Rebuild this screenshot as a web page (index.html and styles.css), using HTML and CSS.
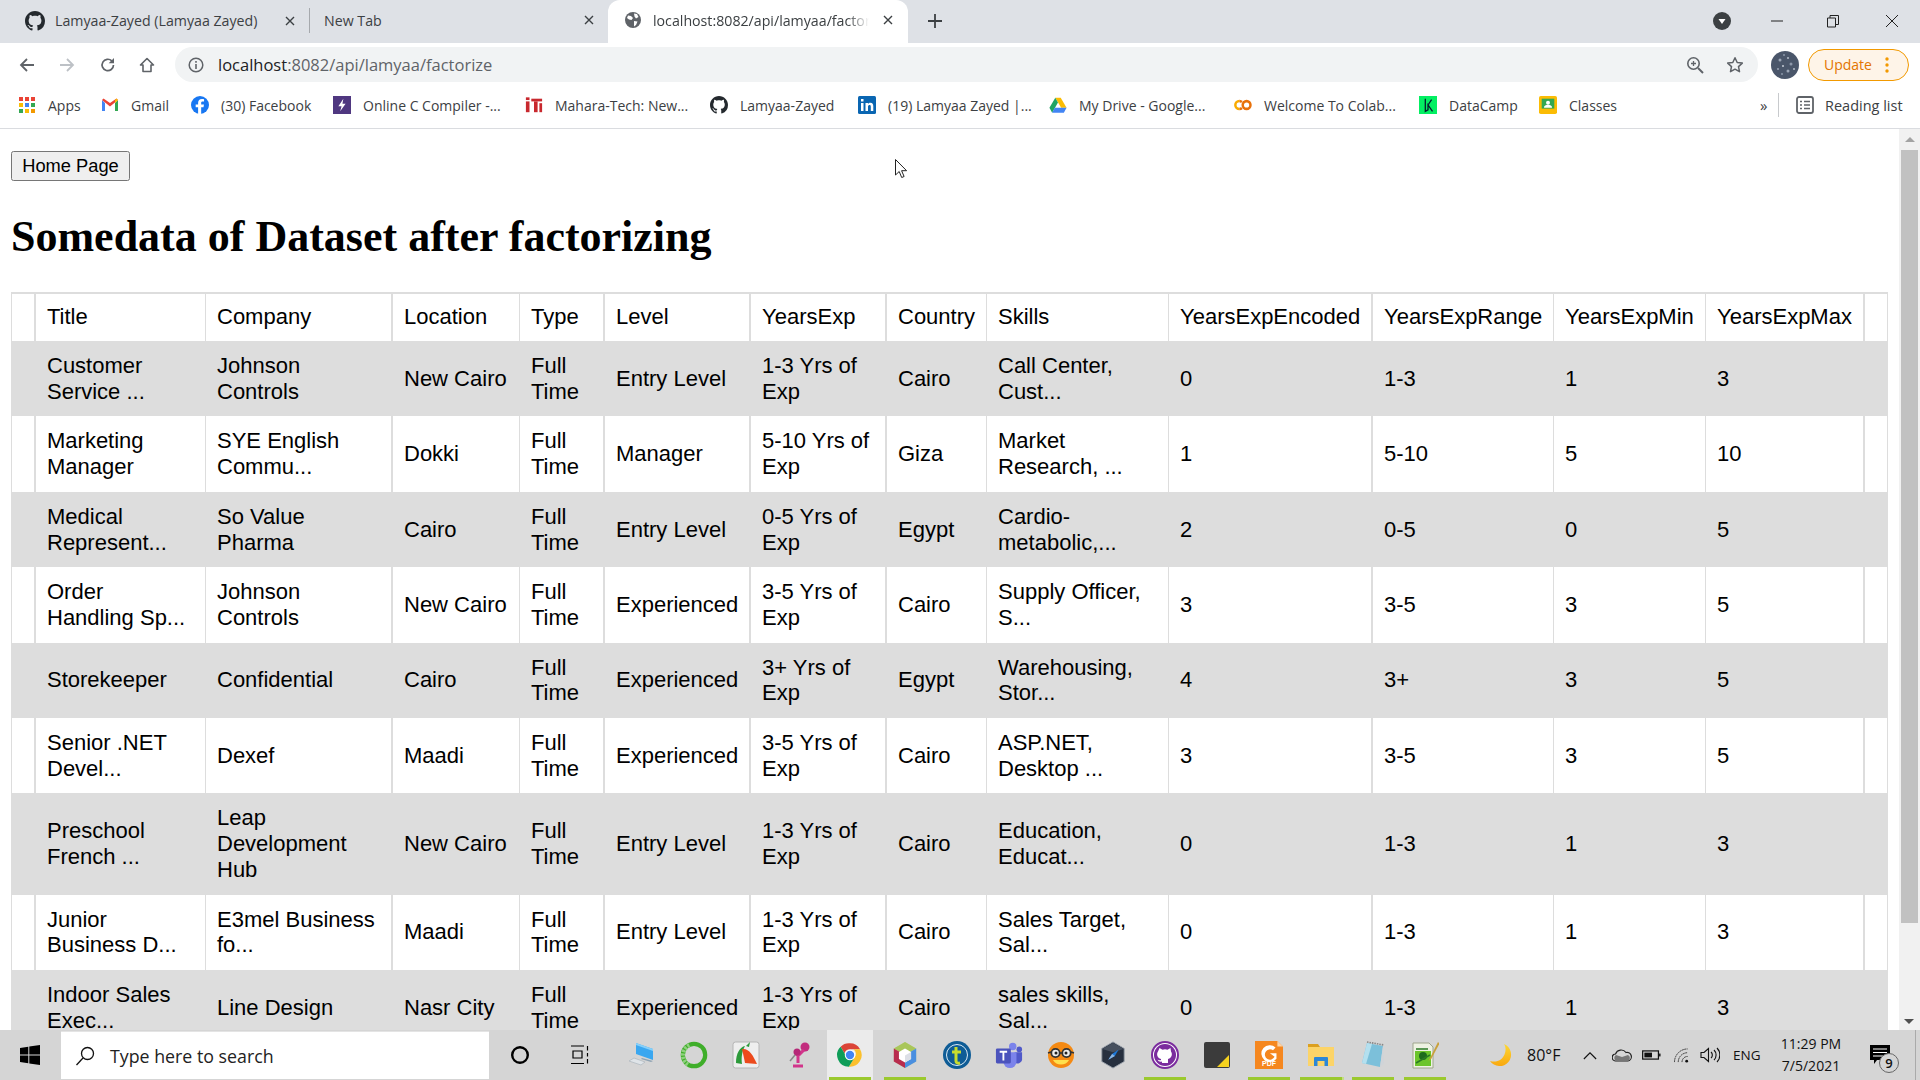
FILE: index.html
```html
<!DOCTYPE html>
<html lang="en">
<head>
<meta charset="utf-8">
<title>Somedata of Dataset after factorizing</title>
<link rel="stylesheet" href="styles.css">
</head>
<body>
<svg class="defs" width="0" height="0">
  <symbol id="gh" viewBox="0 0 16 16"><path d="M8 0C3.58 0 0 3.58 0 8c0 3.54 2.29 6.53 5.47 7.59.4.07.55-.17.55-.38 0-.19-.01-.82-.01-1.49-2.01.37-2.53-.49-2.69-.94-.09-.23-.48-.94-.82-1.13-.28-.15-.68-.52-.01-.53.63-.01 1.08.58 1.23.82.72 1.21 1.87.87 2.33.66.07-.52.28-.87.51-1.07-1.78-.2-3.64-.89-3.64-3.95 0-.87.31-1.59.82-2.15-.08-.2-.36-1.02.08-2.12 0 0 .67-.21 2.2.82.64-.18 1.32-.27 2-.27s1.36.09 2 .27c1.53-1.04 2.2-.82 2.2-.82.44 1.1.16 1.92.08 2.12.51.56.82 1.27.82 2.15 0 3.07-1.87 3.75-3.65 3.95.29.25.54.73.54 1.48 0 1.07-.01 1.93-.01 2.2 0 .21.15.46.55.38A8.013 8.013 0 0016 8c0-4.42-3.58-8-8-8z"/></symbol>
  <symbol id="x" viewBox="0 0 10 10"><path d="M1 1l8 8M9 1l-8 8" fill="none" stroke="#3c4043" stroke-width="1.4"/></symbol>
  <linearGradient id="moon-fill" x1="0" y1="0" x2="0" y2="1"><stop offset="0" stop-color="#fdd835"/><stop offset="1" stop-color="#f9a80f"/></linearGradient>
</svg>

<header class="chrome">
  <div class="tabstrip">
    <div class="tab tab-a">
      <svg class="tab-ico" viewBox="0 0 16 16" fill="#24292e"><use href="#gh"/></svg>
      <span class="tab-text">Lamyaa-Zayed (Lamyaa Zayed)</span>
      <svg class="tab-x"><use href="#x"/></svg>
    </div>
    <div class="tab tab-b">
      <span class="tab-text">New Tab</span>
      <svg class="tab-x"><use href="#x"/></svg>
    </div>
    <div class="tab tab-c">
      <svg class="tab-ico" viewBox="0 0 16 16"><circle cx="8" cy="8" r="8" fill="#5f6368"/><path d="M3 3.5l3 .5 2 2-1.5 2L4 7.5 2 6zM9 1.5l3 .5 1.5 3L11 6.5 9.5 4.5zM9 9l3.5.5L11 13l-2 1.500z" fill="#fff"/></svg>
      <span class="tab-text tab-fade">localhost:8082/api/lamyaa/factorize</span>
      <svg class="tab-x"><use href="#x"/></svg>
    </div>
    <svg class="newtab" viewBox="0 0 14 14"><path d="M7 0v14M0 7h14" stroke="#3c4043" stroke-width="1.8"/></svg>
    <div class="winctl">
      <svg class="ctl-search" viewBox="0 0 18 18"><circle cx="9" cy="9" r="9" fill="#3c4043"/><path d="M5.500 7h7L9 12z" fill="#fff"/></svg>
      <svg class="ctl" viewBox="0 0 14 14"><path d="M1 7h12" stroke="#222" stroke-width="1"/></svg>
      <svg class="ctl" viewBox="0 0 14 14"><path d="M1.500 4h8v9h-8zM4 4V1.500h8.500V10.500H9.500" fill="none" stroke="#222" stroke-width="1"/></svg>
      <svg class="ctl" viewBox="0 0 14 14"><path d="M1 1l12 12M13 1L1 13" stroke="#222" stroke-width="1"/></svg>
    </div>
  </div>

  <div class="toolbar">
    <svg class="nav" viewBox="0 0 16 16"><path d="M15 8H2M8 2L2 8l6 6" fill="none" stroke="#5f6368" stroke-width="1.800"/></svg>
    <svg class="nav" viewBox="0 0 16 16"><path d="M1 8h13M8 2l6 6-6 6" fill="none" stroke="#bdc1c6" stroke-width="1.800"/></svg>
    <svg class="nav" viewBox="0 0 16 16"><path d="M13.500 8A5.700 5.700 0 1 1 11.800 3.900" fill="none" stroke="#5f6368" stroke-width="1.700"/><path d="M14 1v5.300H8.700z" fill="#5f6368"/></svg>
    <svg class="nav" viewBox="0 0 16 16"><path d="M8 1.500L1.500 8H4v6.500h8V8h2.500z" fill="none" stroke="#5f6368" stroke-width="1.600" stroke-linejoin="round"/></svg>
    <div class="omnibox">
      <svg class="omni-info" viewBox="0 0 16 16"><circle cx="8" cy="8" r="6.800" fill="none" stroke="#5f6368" stroke-width="1.500"/><path d="M8 7v5M8 4v1.800" stroke="#5f6368" stroke-width="1.600"/></svg>
      <span class="url"><span class="url-host">localhost</span>:8082/api/lamyaa/factorize</span>
      <svg class="omni-zoom" viewBox="0 0 18 18"><circle cx="7.500" cy="7.500" r="5.700" fill="none" stroke="#5f6368" stroke-width="1.600"/><path d="M12 12l5 5" stroke="#5f6368" stroke-width="2"/><path d="M7.500 5v5M5 7.500h5" stroke="#5f6368" stroke-width="1.300"/></svg>
      <svg class="omni-star" viewBox="0 0 18 18"><path d="M9 1.800l2.200 4.700 5.100.6-3.800 3.500 1 5.100L9 13.200l-4.500 2.500 1-5.100-3.800-3.500 5.100-.6z" fill="none" stroke="#5f6368" stroke-width="1.500" stroke-linejoin="round"/></svg>
    </div>
    <svg class="avatar" viewBox="0 0 28 28"><circle cx="14" cy="14" r="14" fill="#4a566a"/><circle cx="9" cy="9" r="1.500" fill="#9ca6b6"/><circle cx="17" cy="7" r="1" fill="#b5bdc9"/><circle cx="20" cy="13" r="1.500" fill="#8d98aa"/><circle cx="12" cy="15" r="1" fill="#c6ccd6"/><circle cx="7" cy="18" r="1" fill="#9ca6b6"/><circle cx="17" cy="20" r="1.500" fill="#9ca6b6"/><circle cx="13" cy="4" r="1" fill="#8d98aa"/><circle cx="23" cy="18" r="1" fill="#b5bdc9"/><circle cx="11" cy="23" r="1" fill="#8d98aa"/></svg>
    <div class="update"><span>Update</span><svg class="update-dots" viewBox="0 0 4 16"><circle cx="2" cy="2" r="1.700"/><circle cx="2" cy="8" r="1.700"/><circle cx="2" cy="14" r="1.700"/></svg></div>
  </div>

  <div class="bookmarks">
    <div class="bm bm-apps">
      <svg class="bm-ico" viewBox="0 0 18 18"><g fill="#ea4335"><rect x="1" y="1" width="4" height="4"/><rect x="7" y="1" width="4" height="4"/><rect x="13" y="1" width="4" height="4"/></g><g><rect x="1" y="7" width="4" height="4" fill="#fbbc04"/><rect x="7" y="7" width="4" height="4" fill="#4285f4"/><rect x="13" y="7" width="4" height="4" fill="#34a853"/></g><g><rect x="1" y="13" width="4" height="4" fill="#34a853"/><rect x="7" y="13" width="4" height="4" fill="#fbbc04"/><rect x="13" y="13" width="4" height="4" fill="#f29900"/></g></svg>
      <span>Apps</span>
    </div>
    <div class="bm bm-gmail">
      <svg class="bm-ico" viewBox="0 0 18 18"><path d="M1 4v11h3V7z" fill="#4285f4"/><path d="M14 7v8h3V4z" fill="#34a853"/><path d="M1 4l8 6.500L17 4l-1.500-1.500L9 7 2.500 2.500z" fill="#ea4335"/><path d="M14 7l3-3-1.500-1.500L14 4z" fill="#fbbc04"/></svg>
      <span>Gmail</span>
    </div>
    <div class="bm bm-fb">
      <svg class="bm-ico" viewBox="0 0 20 20"><circle cx="10" cy="10" r="10" fill="#1877f2"/><path d="M11.300 20v-7.500h2.600l.5-3h-3.100V7.700c0-.9.400-1.600 1.700-1.600h1.500V3.500s-1.300-.2-2.500-.2c-2.500 0-4.100 1.500-4.100 4.200v2H5.200v3h2.700V20z" fill="#fff"/></svg>
      <span>(30) Facebook</span>
    </div>
    <div class="bm bm-cc">
      <svg class="bm-ico" viewBox="0 0 20 20"><rect width="20" height="20" fill="#4f3780"/><path d="M11.500 3L6 11.500h3.500L8 17l6-8.500h-3.500z" fill="#fff"/></svg>
      <span>Online C Compiler -...</span>
    </div>
    <div class="bm bm-mt">
      <svg class="bm-ico" viewBox="0 0 20 20"><g fill="#c8282e"><rect x="1" y="6" width="4" height="12"/><rect x="1" y="1.500" width="4" height="3" /><rect x="7" y="3" width="12" height="3"/><rect x="10" y="6" width="4" height="12"/><rect x="16" y="8" width="3" height="10"/></g></svg>
      <span>Mahara-Tech: New...</span>
    </div>
    <div class="bm bm-gh">
      <svg class="bm-ico" viewBox="0 0 16 16" fill="#24292e"><use href="#gh"/></svg>
      <span>Lamyaa-Zayed</span>
    </div>
    <div class="bm bm-li">
      <svg class="bm-ico" viewBox="0 0 18 18"><rect width="18" height="18" rx="1.500" fill="#0a66b2"/><path d="M3 7h2.500v8H3zM3 3h2.500v2.500H3zM7.500 7H10v1.100c.5-.8 1.400-1.300 2.500-1.300 2 0 2.800 1.300 2.800 3.400V15h-2.500v-4.300c0-1-.3-1.700-1.200-1.700S10 9.700 10 10.700V15H7.500z" fill="#fff"/></svg>
      <span>(19) Lamyaa Zayed |...</span>
    </div>
    <div class="bm bm-dr">
      <svg class="bm-ico" viewBox="0 0 20 18"><path d="M7 1h6l6.500 11h-6z" fill="#fbbc04"/><path d="M7 1L.5 12l3 5.500L10 6.200z" fill="#1fa463"/><path d="M3.500 17.500h13l3-5.500h-13z" fill="#4285f4"/></svg>
      <span>My Drive - Google...</span>
    </div>
    <div class="bm bm-co">
      <svg class="bm-ico" viewBox="0 0 20 14"><path d="M6 2.500a4.500 4.500 0 1 0 0 9" fill="none" stroke="#f9ab00" stroke-width="2.800"/><circle cx="14" cy="7" r="4.300" fill="none" stroke="#e8710a" stroke-width="2.800"/><path d="M6 2.500A4.500 4.500 0 0 1 8.800 3.700M6 11.500a4.500 4.500 0 0 0 2.800-1.200" fill="none" stroke="#e8710a" stroke-width="2.800"/></svg>
      <span>Welcome To Colab...</span>
    </div>
    <div class="bm bm-dc">
      <svg class="bm-ico" viewBox="0 0 20 20"><rect width="20" height="20" fill="#03ef62"/><path d="M7 3v14l3-1.700V10l5 7M10 10l4-6" fill="none" stroke="#05192d" stroke-width="1.400"/></svg>
      <span>DataCamp</span>
    </div>
    <div class="bm bm-cl">
      <svg class="bm-ico" viewBox="0 0 20 20"><rect width="20" height="20" rx="2" fill="#fbbc04"/><rect x="3" y="3" width="14" height="11" fill="#34a853"/><circle cx="10" cy="7.500" r="2.200" fill="#fff"/><path d="M5.500 13c0-2.300 2-3.200 4.500-3.200s4.500 .9 4.500 3.200z" fill="#fff"/></svg>
      <span>Classes</span>
    </div>
    <span class="bm-more">»</span>
    <span class="bm-sep"></span>
    <div class="bm-read">
      <svg class="bm-ico" viewBox="0 0 18 18"><rect x="1" y="1" width="16" height="16" rx="2" fill="none" stroke="#5f6368" stroke-width="1.800"/><path d="M4 5.500h2M8 5.500h6M4 9h2M8 9h6M4 12.500h2M8 12.500h6" stroke="#5f6368" stroke-width="1.600"/></svg>
      <span>Reading list</span>
    </div>
  </div>
</header>

<div class="viewport">
  <main class="page">
    <button class="home" type="button">Home Page</button>
    <h1>Somedata of Dataset after factorizing</h1>
    <table class="data">
      <colgroup>
        <col class="c0"><col class="c1"><col class="c2"><col class="c3"><col class="c4"><col class="c5"><col class="c6"><col class="c7"><col class="c8"><col class="c9"><col class="c10"><col class="c11"><col class="c12"><col class="c13">
      </colgroup>
      <thead>
        <tr><th class="b2"></th><th>Title</th><th class="b2">Company</th><th>Location</th><th class="b2">Type</th><th class="b2">Level</th><th class="b2">YearsExp</th><th>Country</th><th>Skills</th><th class="b2">YearsExpEncoded</th><th>YearsExpRange</th><th>YearsExpMin</th><th class="b2">YearsExpMax</th><th></th></tr>
      </thead>
      <tbody>
        <tr><td class="b2"></td><td>Customer Service ...</td><td class="b2">Johnson Controls</td><td>New Cairo</td><td class="b2">Full Time</td><td class="b2">Entry Level</td><td class="b2">1-3 Yrs of Exp</td><td>Cairo</td><td>Call Center, Cust...</td><td class="b2">0</td><td>1-3</td><td>1</td><td class="b2">3</td><td></td></tr>
        <tr><td class="b2"></td><td>Marketing Manager</td><td class="b2">SYE English Commu...</td><td>Dokki</td><td class="b2">Full Time</td><td class="b2">Manager</td><td class="b2">5-10 Yrs of Exp</td><td>Giza</td><td>Market Research, ...</td><td class="b2">1</td><td>5-10</td><td>5</td><td class="b2">10</td><td></td></tr>
        <tr><td class="b2"></td><td>Medical Represent...</td><td class="b2">So Value Pharma</td><td>Cairo</td><td class="b2">Full Time</td><td class="b2">Entry Level</td><td class="b2">0-5 Yrs of Exp</td><td>Egypt</td><td>Cardio-metabolic,...</td><td class="b2">2</td><td>0-5</td><td>0</td><td class="b2">5</td><td></td></tr>
        <tr><td class="b2"></td><td>Order Handling Sp...</td><td class="b2">Johnson Controls</td><td>New Cairo</td><td class="b2">Full Time</td><td class="b2">Experienced</td><td class="b2">3-5 Yrs of Exp</td><td>Cairo</td><td>Supply Officer, S...</td><td class="b2">3</td><td>3-5</td><td>3</td><td class="b2">5</td><td></td></tr>
        <tr><td class="b2"></td><td>Storekeeper</td><td class="b2">Confidential</td><td>Cairo</td><td class="b2">Full Time</td><td class="b2">Experienced</td><td class="b2">3+ Yrs of Exp</td><td>Egypt</td><td>Warehousing, Stor...</td><td class="b2">4</td><td>3+</td><td>3</td><td class="b2">5</td><td></td></tr>
        <tr><td class="b2"></td><td>Senior .NET Devel...</td><td class="b2">Dexef</td><td>Maadi</td><td class="b2">Full Time</td><td class="b2">Experienced</td><td class="b2">3-5 Yrs of Exp</td><td>Cairo</td><td>ASP.NET, Desktop ...</td><td class="b2">3</td><td>3-5</td><td>3</td><td class="b2">5</td><td></td></tr>
        <tr><td class="b2"></td><td>Preschool French ...</td><td class="b2">Leap Development Hub</td><td>New Cairo</td><td class="b2">Full Time</td><td class="b2">Entry Level</td><td class="b2">1-3 Yrs of Exp</td><td>Cairo</td><td>Education, Educat...</td><td class="b2">0</td><td>1-3</td><td>1</td><td class="b2">3</td><td></td></tr>
        <tr><td class="b2"></td><td>Junior Business D...</td><td class="b2">E3mel Business fo...</td><td>Maadi</td><td class="b2">Full Time</td><td class="b2">Entry Level</td><td class="b2">1-3 Yrs of Exp</td><td>Cairo</td><td>Sales Target, Sal...</td><td class="b2">0</td><td>1-3</td><td>1</td><td class="b2">3</td><td></td></tr>
        <tr><td class="b2"></td><td>Indoor Sales Exec...</td><td class="b2">Line Design</td><td>Nasr City</td><td class="b2">Full Time</td><td class="b2">Experienced</td><td class="b2">1-3 Yrs of Exp</td><td>Cairo</td><td>sales skills, Sal...</td><td class="b2">0</td><td>1-3</td><td>1</td><td class="b2">3</td><td></td></tr>
      </tbody>
    </table>
    <svg class="cursor" viewBox="0 0 12 19"><path d="M.5.500v15.500l3.700-3.500 2.500 6 2.400-1-2.500-5.800h5z" fill="#fff" stroke="#222" stroke-width="1"/></svg>
  </main>
  <div class="scrollbar">
    <span class="sb-up"></span>
    <span class="sb-thumb"></span>
    <span class="sb-down"></span>
  </div>
</div>

<footer class="taskbar">
  <svg class="win" viewBox="0 0 20 20"><path d="M0 3l8.300-1.200v7.700H0zM9.300 1.600L20 0v9.500H9.300zM0 10.500h8.300v7.700L0 17zM9.300 10.500H20V20L9.300 18.400z" fill="#000"/></svg>
  <div class="search">
    <svg class="search-ico" viewBox="0 0 20 20"><circle cx="12.500" cy="7.500" r="6" fill="none" stroke="#111" stroke-width="1.300"/><path d="M8 12L1.500 19" stroke="#111" stroke-width="1.300"/></svg>
    <span>Type here to search</span>
  </div>
  <div class="tb-sys">
    <svg class="cortana" viewBox="0 0 20 20"><circle cx="10" cy="10" r="7.800" fill="none" stroke="#000" stroke-width="2.400"/></svg>
    <svg class="taskview" viewBox="0 0 20 20"><path d="M1 1h13M1 18.500h13M3 6h9v7H3zM17.500 1v4.500M17.500 8v3.500M17.500 14v4.500" fill="none" stroke="#000" stroke-width="1.200"/></svg>
  </div>
  <div class="apps">
    <div class="slot"><svg class="app" viewBox="0 0 28 28"><path d="M8 2l17 6v11L8 13z" fill="#3aa7f0"/><path d="M8 2l17 6v2L8 4z" fill="#86d0fa"/><path d="M14 17l11 3-2 1-10-3z" fill="#8fa3b3"/><path d="M1 20l12 4 4-3-11-4z" fill="#dfe4e8" stroke="#a6b0b8" stroke-width=".6"/></svg></div>
    <div class="slot"><svg class="app" viewBox="0 0 28 30"><circle cx="14" cy="15" r="12" fill="none" stroke="#3fae2a" stroke-width="4.500"/><path d="M9 4.500A12 12 0 0 0 8 25.500" fill="none" stroke="#8fd07f" stroke-width="4.500" stroke-dasharray="2.500 1.200"/></svg></div>
    <div class="slot"><svg class="app" viewBox="0 0 28 28"><rect x="1" y="1" width="26" height="26" rx="2.500" fill="#eee" stroke="#b5b5b5"/><path d="M4 22C4 12 8 6 13 5c-3 5-4 12-3 18z" fill="#2c9a3a"/><path d="M10 8c7-1 11 6 15 15l-12-1C12 17 11 12 10 8z" fill="#ec4a1c"/><path d="M14 5l4-4-1 5z" fill="#2c9a3a"/></svg></div>
    <div class="slot"><svg class="app" viewBox="0 0 28 28"><circle cx="21" cy="6" r="4.500" fill="#c22d7e"/><path d="M19 8l-8 6 3 3 7-7z" fill="#d2358b"/><circle cx="13" cy="11" r="3.500" fill="#b52877"/><path d="M14 16v6M9 25h10" stroke="#d2358b" stroke-width="3"/><path d="M11 14l-5 6" stroke="#888" stroke-width="1.500"/></svg></div>
    <div class="slot slot-on"><svg class="app" viewBox="0 0 48 48"><path d="M24 4a20 20 0 0 1 17.300 10H24a10 10 0 0 0-9.500 6.900L8 9.700A20 20 0 0 1 24 4z" fill="#db4437"/><path d="M41.300 14A20 20 0 0 1 22 44l9-14.500a10 10 0 0 0-1-15.500z" fill="#fbc02d"/><path d="M8 9.700l9 15.500a9.900 9.900 0 0 0 14 4.500L22 44A20 20 0 0 1 8 9.700z" fill="#0f9d58"/><circle cx="24" cy="24" r="9" fill="#fff"/><circle cx="24" cy="24" r="7.200" fill="#4285f4"/></svg></div>
    <div class="slot slot-on slot-next"><svg class="app" viewBox="0 0 28 30"><path d="M14 1l12 7v14l-12 7-12-7V8z" fill="#c8d7a0"/><path d="M14 1l12 7-12 7-12-7z" fill="#a9c65a"/><path d="M2 8l12 7v14L2 22z" fill="#b82c4e"/><path d="M26 8v14l-12 7V15z" fill="#4a8fe0"/><path d="M14 8l6.500 3.800v7.400L14 23l-6.500-3.800v-7.400z" fill="#fff"/><path d="M14 15.500l6.500-3.700v7.400L14 23z" fill="#dcdfe6"/></svg></div>
    <div class="slot"><svg class="app" viewBox="0 0 28 28"><circle cx="14" cy="14" r="14" fill="#0e5c96"/><circle cx="14" cy="14" r="10.500" fill="none" stroke="#d8e9f5" stroke-width="1"/><path d="M13 6v14c0 2 1.500 2.500 4 2M9 11h9" fill="none" stroke="#c8dc2e" stroke-width="3"/></svg></div>
    <div class="slot"><svg class="app" viewBox="0 0 30 28"><circle cx="19" cy="5" r="4" fill="#7b83eb"/><circle cx="26" cy="8" r="3" fill="#5059c9"/><path d="M21 11h8v8a5 5 0 0 1-8 3z" fill="#5059c9"/><path d="M9 11h14v10a7 7 0 0 1-14 0z" fill="#7b83eb"/><rect x="1" y="7" width="16" height="16" rx="1.500" fill="#4b53bc"/><path d="M5 10.500h8M9 10.500V20" stroke="#fff" stroke-width="2"/></svg></div>
    <div class="slot"><svg class="app" viewBox="0 0 28 28"><circle cx="14" cy="14" r="13" fill="#f58a13"/><path d="M6 19c3 6 13 6 16 0z" fill="#ffe14d"/><circle cx="8.500" cy="12" r="4.200" fill="#eee" stroke="#333" stroke-width="1.800"/><circle cx="19.500" cy="12" r="4.200" fill="#eee" stroke="#333" stroke-width="1.800"/><circle cx="9" cy="12" r="1.500" fill="#222"/><circle cx="19" cy="12" r="1.500" fill="#222"/><path d="M12.500 12h3M1 12l3-1M24 11l3 1" stroke="#333" stroke-width="1.500"/></svg></div>
    <div class="slot"><svg class="app" viewBox="0 0 28 30"><path d="M14 1l12 7v14l-12 7-12-7V8z" fill="#27303f" stroke="#9aa1ab" stroke-width="1"/><path d="M2.500 8.500L14 2l11.500 6.500L14 12z" fill="#47505e"/><path d="M20 9l-7 5-4 6 7-4z" fill="#1d78d8"/><path d="M13 14l-4 6 7-4z" fill="#8fb6e0"/></svg></div>
    <div class="slot slot-on"><svg class="app" viewBox="0 0 28 28"><circle cx="14" cy="14" r="13" fill="#fff" stroke="#7b2c9e" stroke-width="2"/><circle cx="14" cy="14" r="11" fill="#7b2c9e"/><path d="M8.500 7l3 1.700a9 9 0 0 1 5 0l3-1.700.5 3.500c1.700 2.500 1 6.500-3 7.500v4h-6v-1.500c-2 .7-3.500-.2-4.500-2 1 .5 2 1 3.500.5V18c-4-1-4.700-5-3-7.500z" fill="#fff"/></svg></div>
    <div class="slot"><svg class="app" viewBox="0 0 28 28"><rect x="1" y="1" width="26" height="26" rx="2" fill="#3b3b3b"/><path d="M14 26h12V14z" fill="#f6d21f"/></svg></div>
    <div class="slot slot-on"><svg class="app" viewBox="0 0 30 30"><path d="M0 0h24l6 6v24H0z" fill="#f5871f"/><path d="M24 0l6 6h-6z" fill="#fad3a8"/><path d="M22 7a9 9 0 1 0 1 12v-6h-7l5 4a5.500 5.500 0 1 1-1.700-7z" fill="#fff"/><text class="pdf-label" x="15" y="27">PDF</text></svg></div>
    <div class="slot slot-on slot-multi"><svg class="app" viewBox="0 0 28 28"><path d="M1 3h10l2 3H1z" fill="#dca020"/><rect x="1" y="6" width="26" height="19" fill="#fcd468"/><path d="M7 25v-8a1 1 0 0 1 1-1h12a1 1 0 0 1 1 1v8h-3.500v-5h-7v5z" fill="#2d87d6"/></svg></div>
    <div class="slot slot-on"><svg class="app" viewBox="0 0 28 28"><path d="M8 2l16 3-3 21-18-4z" fill="#7cc0da"/><path d="M3 22L8 2l5 1-6 20z" fill="#b4e0ef"/><path d="M24 5l1 18-4 3z" fill="#d0d4d8"/><path d="M8 1l17 3" stroke="#888" stroke-width="1.600" stroke-dasharray="1.500 1"/></svg></div>
    <div class="slot slot-on"><svg class="app" viewBox="0 0 28 28"><path d="M2 2h16l4 4v21H2z" fill="#eef2e2" stroke="#9fa58c"/><rect x="4" y="10" width="16" height="15" fill="#6cc52a"/><circle cx="12" cy="15" r="4" fill="#1e6b1d"/><path d="M5 8h12M5 22l14-8" stroke="#2b7a24" stroke-width="1.500"/><path d="M27 1l-8 16-1.500 3 3-2.500 8-15z" fill="#c9a13b"/></svg></div>
  </div>
  <div class="tray">
    <svg class="moon" viewBox="0 0 24 24"><path d="M15 1A11.500 11.500 0 1 1 1 18c7 2 12-1 14.500-6.500C17 8 17 4 15 1z" fill="url(#moon-fill)"/></svg>
    <span class="temp">80°F</span>
    <svg class="tray-chev" viewBox="0 0 16 10"><path d="M1 9l7-7 7 7" fill="none" stroke="#111" stroke-width="1.300"/></svg>
    <svg class="tray-cloud" viewBox="0 0 20 14"><path d="M4 13a3.500 3.500 0 0 1-.5-7A6 6 0 0 1 14 4.500 4.300 4.300 0 0 1 16 13z" fill="#d6d6d6" stroke="#222" stroke-width="1.200"/><path d="M4 13a3.500 3.500 0 0 1 0-6l6 2 6-2a3.300 3.300 0 0 1 0 6z" fill="#777"/></svg>
    <svg class="tray-batt" viewBox="0 0 20 12"><rect x=".7" y="1.700" width="16.600" height="8.600" fill="none" stroke="#111" stroke-width="1.300"/><rect x="2.500" y="3.500" width="8" height="5" fill="#111"/><rect x="18" y="4.500" width="1.500" height="3" fill="#111"/></svg>
    <svg class="tray-wifi" viewBox="0 0 18 16"><path d="M1 15A14 14 0 0 1 15 1M5 15A10 10 0 0 1 15 5M9 15a6 6 0 0 1 6-6" fill="none" stroke="#333" stroke-width="1" stroke-dasharray="2 .6"/><circle cx="14" cy="14" r="1.500" fill="#111"/></svg>
    <svg class="tray-vol" viewBox="0 0 20 16"><path d="M1 5.500h3L8.500 1.500v13L4 10.500H1z" fill="none" stroke="#111" stroke-width="1.100"/><path d="M11 5a4 4 0 0 1 0 6M14 3a7 7 0 0 1 0 10M17 1a10 10 0 0 1 0 14" fill="none" stroke="#111" stroke-width="1.100"/></svg>
    <span class="lang">ENG</span>
    <div class="clock"><span>11:29 PM</span><span>7/5/2021</span></div>
    <div class="notif">
      <svg class="notif-ico" viewBox="0 0 20 20"><path d="M0 0h20v15H7l-3 4v-4H0z" fill="#000"/><path d="M3 4h14M3 7.500h14M3 11h11" stroke="#fff" stroke-width="1"/></svg>
      <span class="badge">9</span>
    </div>
    <span class="tray-edge"></span>
  </div>
</footer>
</body>
</html>
```

FILE: styles.css
```css
* { box-sizing: border-box; }
html, body { margin: 0; padding: 0; width: 1920px; height: 1080px; overflow: hidden; }
body { display: flex; flex-direction: column; background: #fff; color: #000; font-family: "Liberation Serif", serif; }
.defs { position: absolute; }

/* browser chrome */
.chrome { flex: none; height: 129px; font-family: "Open Sans", sans-serif; color: #3c4043; border-bottom: 1px solid #dadce0; }
.tabstrip { height: 43px; background: #dee1e6; display: flex; align-items: center; font-size: 14.200px; }
.tab { height: 43px; display: flex; align-items: center; flex: none; padding-bottom: 3px; }
.tab-a { width: 310px; padding-left: 25px; border-right: 1px solid #a6a9ad; height: 25px; padding-bottom: 0; margin-bottom: 2px; }
.tab-b { width: 298px; padding-left: 14px; }
.tab-c { width: 300px; padding-left: 17px; background: #fff; border-radius: 12px 12px 0 0; }
.tab-ico { width: 20px; height: 20px; flex: none; margin-right: 10px; }
.tab-c .tab-ico { width: 16px; height: 16px; margin-right: 12px; }
.tab-a .tab-text { width: 230px; white-space: nowrap; }
.tab-b .tab-text { width: 260px; white-space: nowrap; }
.tab-fade { width: 216px; white-space: nowrap; overflow: hidden; mask-image: linear-gradient(90deg, #000 90%, transparent); -webkit-mask-image: linear-gradient(90deg, #000 90%, transparent); }
.tab-x { width: 10px; height: 10px; flex: none; }
.tab-c .tab-x { margin-left: 14px; }
.newtab { width: 14px; height: 14px; margin-left: 20px; margin-bottom: 2px; flex: none; }
.winctl { margin-left: auto; display: flex; align-items: center; padding-right: 21px; margin-bottom: 2px; }
.ctl-search { width: 18px; height: 18px; margin-right: 39px; }
.ctl { width: 14px; height: 14px; margin-left: 42px; }
.ctl:last-child { margin-left: 45px; }
.ctl-search + .ctl { margin-left: 0; }

.toolbar { height: 43px; display: flex; align-items: center; background: #fff; padding-left: 19px; }
.nav { width: 16px; height: 16px; margin-right: 24px; flex: none; }
.nav:nth-child(3) { margin-left: 1px; margin-right: 23px; }
.nav:nth-child(4) { margin-right: 20px; }
.omnibox { width: 1583px; height: 35px; border-radius: 18px; background: #f1f3f4; display: flex; align-items: center; padding-left: 13px; margin-right: 13px; flex: none; }
.omni-info { width: 16px; height: 16px; flex: none; margin-right: 14px; }
.url { font-size: 16.500px; color: #5f6368; flex: 1; }
.url-host { color: #202124; }
.omni-zoom { width: 18px; height: 18px; margin-right: 22px; }
.omni-star { width: 18px; height: 18px; margin-right: 14px; }
.avatar { width: 28px; height: 28px; flex: none; margin-right: 9px; }
.update { width: 101px; height: 32px; border: 1px solid #f29900; border-radius: 16px; background: #fef4e8; color: #e37400; font-size: 14px; display: flex; align-items: center; padding-left: 15px; flex: none; }
.update-dots { width: 4px; height: 16px; fill: #f29900; margin-left: 13px; }

.bookmarks { height: 42px; display: flex; align-items: center; font-size: 14px; background: #fff; padding-left: 18px; padding-bottom: 4px; }
.bm { display: flex; align-items: center; flex: none; white-space: nowrap; }
.bm-ico { width: 18px; height: 18px; flex: none; margin-right: 12px; }
.bm-apps { width: 83px; }
.bm-gmail { width: 90px; }
.bm-fb { width: 142px; }
.bm-cc { width: 192px; }
.bm-mt { width: 185px; }
.bm-gh { width: 148px; }
.bm-li { width: 191px; }
.bm-dr { width: 185px; }
.bm-co { width: 185px; }
.bm-dc { width: 120px; }
.bm-cl { width: 221px; }
.bm-more { width: 18px; font-size: 15px; flex: none; }
.bm-sep { width: 1px; height: 24px; background: #c8cacd; margin-right: 17px; flex: none; }
.bm-read { display: flex; align-items: center; flex: none; white-space: nowrap; font-size: 14.500px; }
.bm-read .bm-ico { margin-right: 11px; }

/* page */
.viewport { flex: 1; min-height: 0; display: flex; position: relative; overflow: hidden; }
.page { width: 1899px; padding: 22px 0 0 11px; position: relative; flex: none; }
.home { display: block; width: 119px; height: 30px; padding: 0; background: #efefef; border: 1px solid #767676; border-radius: 2.500px; font-family: "Liberation Sans", sans-serif; font-size: 18.300px; color: #000; }
h1 { margin: 31px 0; font-size: 44px; line-height: 49px; font-weight: bold; font-family: "Liberation Serif", serif; }
.data { table-layout: fixed; width: 1877px; border-collapse: separate; border-spacing: 0; border-top: 2px solid #ddd; border-left: 1px solid #ddd; border-right: 1px solid #ddd; font-family: "Liberation Sans", sans-serif; font-size: 22px; line-height: 25.700px; }
.c0 { width: 24px; } .c1 { width: 170px; } .c2 { width: 187px; } .c3 { width: 127px; } .c4 { width: 85px; } .c5 { width: 146px; } .c6 { width: 136px; } .c7 { width: 100px; } .c8 { width: 182px; } .c9 { width: 204px; } .c10 { width: 181px; } .c11 { width: 152px; } .c12 { width: 159px; } .c13 { width: 22px; }
th, td { padding: 12px 12px 12px 11px; text-align: left; font-weight: normal; border-right: 1px solid #ddd; vertical-align: middle; }
th { padding: 10px 0 11.300px 11px; white-space: nowrap; }
td:nth-child(n+3) { padding-right: 8px; }
th.b2, td.b2 { border-right-width: 2px; }
th:last-child, td:last-child { border-right: 0; }
tbody tr:nth-child(odd) { background: #ddd; }
.cursor { position: absolute; left: 895px; top: 30px; width: 12px; height: 19px; }

.scrollbar { width: 21px; background: #f1f1f1; display: flex; flex-direction: column; align-items: center; flex: none; position: relative; }
.sb-up { width: 0; height: 0; margin-top: 8px; border: 5px solid transparent; border-top: 0; border-bottom: 5px solid #a3a3a3; }
.sb-thumb { width: 17px; height: 773px; margin-top: 8px; background: #c1c1c1; }
.sb-down { position: absolute; left: 5px; bottom: 6px; width: 0; height: 0; border: 5px solid transparent; border-bottom: 0; border-top: 5px solid #505050; }

/* taskbar */
.taskbar { flex: none; height: 50px; background: #d5d5d5; display: flex; align-items: center; font-family: "Open Sans", sans-serif; color: #111; }
.win { width: 20px; height: 20px; margin-left: 20px; margin-right: 21px; flex: none; }
.search { width: 428px; height: 48px; background: #fff; display: flex; align-items: center; padding-left: 14px; font-size: 17.800px; color: #222; flex: none; border-top: 1px solid #e4e4e4; }
.search-ico { width: 20px; height: 20px; margin-right: 15px; flex: none; }
.tb-sys { display: flex; align-items: center; margin-left: 21px; flex: none; }
.cortana { width: 20px; height: 20px; margin-right: 40px; }
.taskview { width: 20px; height: 20px; margin-right: 26px; }
.apps { display: flex; align-items: center; height: 50px; flex: none; }
.slot { width: 52px; height: 50px; display: flex; align-items: center; justify-content: center; position: relative; flex: none; }
.slot-next { margin-left: 3px; }
.slot-on::after { content: ""; position: absolute; left: 5px; right: 5px; bottom: 0; height: 3px; background: #9bc92f; }
.slot:nth-child(5) { background: linear-gradient(90deg, transparent 3px, #ebebeb 3px, #ebebeb 49px, transparent 49px); }
.slot-multi::before { content: ""; position: absolute; left: 40px; width: 9px; bottom: 0; height: 3px; background: #c4de83; }
.app { width: 28px; height: 28px; flex: none; }
.pdf-label { font-family: "Liberation Sans", sans-serif; font-size: 7.500px; font-weight: bold; fill: #fff; text-anchor: middle; }
.tray { display: flex; align-items: center; height: 50px; margin-left: 38px; font-size: 14.500px; position: relative; flex: 1; }
.moon { width: 24px; height: 24px; margin-left: 0; margin-right: 14px; flex: none; }
.temp { font-size: 16px; width: 56px; flex: none; }
.tray-chev { width: 14px; height: 9px; margin-right: 15px; flex: none; }
.tray-cloud { width: 20px; height: 14px; margin-right: 10px; flex: none; }
.tray-batt { width: 19px; height: 12px; margin-right: 12px; flex: none; }
.tray-wifi { width: 18px; height: 15px; margin-right: 9px; flex: none; }
.tray-vol { width: 20px; height: 16px; margin-right: 13px; flex: none; }
.lang { font-size: 13.500px; width: 47px; flex: none; }
.clock { display: flex; flex-direction: column; align-items: center; width: 62px; font-size: 14px; line-height: 22px; flex: none; }
.notif { position: relative; width: 22px; height: 20px; margin-left: 28px; flex: none; }
.notif-ico { width: 20px; height: 20px; display: block; }
.badge { position: absolute; left: 9px; top: 8px; width: 20px; height: 20px; border-radius: 50%; border: 1px solid #666; background: #d5d5d5; font-size: 13px; font-weight: 600; display: flex; align-items: center; justify-content: center; }
.tray-edge { position: absolute; right: 4px; top: 0; bottom: 0; width: 1px; background: #aaa; }
```
